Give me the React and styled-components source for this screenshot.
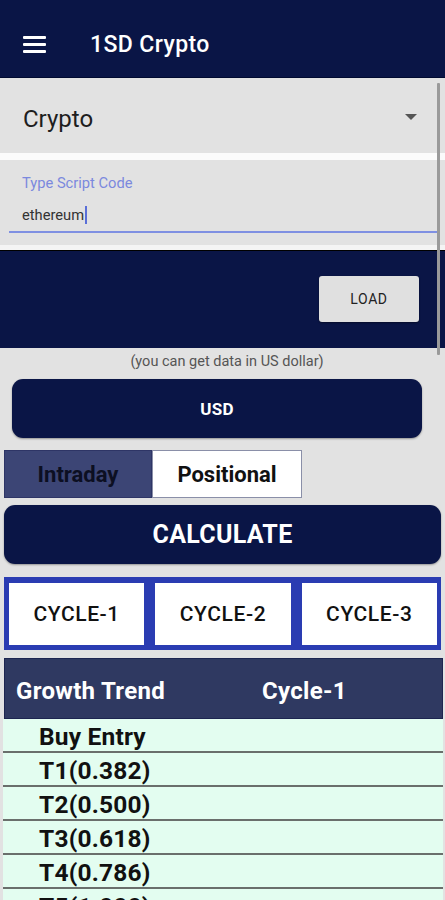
import React from "react";
import styled, { createGlobalStyle } from "styled-components";

const Global = createGlobalStyle`
  html, body { margin: 0; padding: 0; background: #e2e2e2; }
  body { font-family: Roboto, "Liberation Sans", sans-serif; width: 445px; height: 900px; overflow: hidden; }
`;

const NAVY = "#0a1546";

const Page = styled.div`
  position: relative;
  width: 445px;
  height: 900px;
  background: #e2e2e2;
  overflow: hidden;
`;

const AppBar = styled.header`
  height: 78px;
  background: ${NAVY};
  display: flex;
  align-items: center;
  padding-left: 23px;
  gap: 44px;
  box-sizing: border-box;
  padding-top: 12px;
  border-bottom: 1px solid #000a30;
`;

const Burger = styled.div`
  width: 23px;
  display: flex;
  flex-direction: column;
  gap: 4px;
  span { display: block; height: 3px; background: #fff; border-radius: 1px; }
`;

const Title = styled.h1`
  margin: 0;
  color: #fff;
  font-size: 23px;
  font-weight: 500;
  letter-spacing: 0.4px;
`;

const Spinner = styled.div`
  height: 75px;
  display: flex;
  align-items: center;
  justify-content: space-between;
  padding: 6px 20px 0 23px;
  box-sizing: border-box;
  width: 437px;
  font-size: 24px;
  color: #1e1e1e;
`;

const Triangle = styled.div`
  width: 0;
  height: 0;
  border-left: 6px solid transparent;
  border-right: 6px solid transparent;
  border-top: 6px solid #555;
  margin-top: -4px;
`;

const WhiteStrip = styled.div`
  height: ${(p) => p.$h}px;
  background: ${(p) => p.$c || "#fafafa"};
`;

const InputBox = styled.div`
  width: 437px;
  height: 85px;
  box-sizing: border-box;
  padding: 14px 0 0 9px;
  display: flex;
  flex-direction: column;
`;

const Label = styled.div`
  font-size: 14.7px;
  color: #7b89de;
  padding-left: 13px;
  height: 18px;
`;

const InputText = styled.div`
  margin-top: 14px;
  font-size: 14.7px;
  color: #333;
  padding-left: 13px;
  height: 17px;
  display: flex;
  align-items: center;
`;

const Caret = styled.span`
  display: inline-block;
  width: 2px;
  height: 18px;
  background: #5a6fd8;
  margin-left: 1px;
`;

const Underline = styled.div`
  margin-top: 8px;
  height: 2px;
  background: #7f90e2;
`;

const LoadPanel = styled.div`
  height: 98px;
  background: ${NAVY};
  border-top: 1px solid #000;
  box-sizing: border-box;
  display: flex;
  align-items: flex-start;
  justify-content: flex-end;
  padding: 25px 26px 0 0;
`;

const LoadButton = styled.button`
  width: 100px;
  height: 46px;
  background: #e0e0e0;
  border: none;
  border-radius: 3px;
  font-family: Roboto, "Liberation Sans", sans-serif;
  font-size: 14px;
  font-weight: 400;
  letter-spacing: 0.6px;
  color: #222;
  box-shadow: 0 1px 2px rgba(0,0,0,0.4);
`;

const Hint = styled.div`
  text-align: center;
  font-size: 14.5px;
  color: #555;
  padding: 5px 0 0 9px;
  height: 28px;
  box-sizing: border-box;
`;

const PillButton = styled.button`
  display: block;
  box-sizing: border-box;
  margin: ${(p) => p.$m};
  width: ${(p) => p.$w}px;
  height: 59px;
  background: ${NAVY};
  color: #fff;
  border: none;
  border-radius: 11px;
  font-family: Roboto, "Liberation Sans", sans-serif;
  font-weight: 700;
  font-size: ${(p) => p.$fs}px;
  letter-spacing: 0.3px;
  box-shadow: 0 1px 2px rgba(0,0,0,0.35);
`;

const Tabs = styled.div`
  display: flex;
  margin: 12px 0 0 4px;
  height: 48px;
`;

const Tab = styled.div`
  width: ${(p) => p.$w}px;
  box-sizing: border-box;
  display: flex;
  align-items: center;
  justify-content: center;
  font-size: 22px;
  font-weight: 700;
  color: ${(p) => (p.$active ? "#0c0f22" : "#111")};
  background: ${(p) => (p.$active ? "#3c4575" : "#fff")};
  border: 1px solid ${(p) => (p.$active ? "#2e3566" : "#8a8fa8")};
`;

const CycleRow = styled.div`
  margin: 13px 4px 0 4px;
  height: 73px;
  box-sizing: border-box;
  background: #2a3cb2;
  padding: 6px 4px 5px 5px;
  display: flex;
  gap: 11px;
`;

const CycleCell = styled.div`
  flex: 1;
  background: #fff;
  display: flex;
  align-items: center;
  justify-content: center;
  font-size: 21px;
  font-weight: 500;
  color: #111;
  letter-spacing: 0.6px;
`;

const Table = styled.div`
  margin: 8px 2px 0 4px;
`;

const HeadRow = styled.div`
  height: 61px;
  background: #2f3961;
  border: 1px solid #1d2550;
  box-sizing: border-box;
  display: grid;
  grid-template-columns: 246px 1fr;
  align-items: center;
  padding: 4px 0 0 11px;
  color: #fff;
  font-size: 24px;
  font-weight: 700;
  letter-spacing: 0.3px;
`;

const Row = styled.div`
  height: 34px;
  background: #e3fdf0;
  border-bottom: 2px solid #6a6f6c;
  box-sizing: border-box;
  display: flex;
  align-items: center;
  padding: 3px 0 0 36px;
  font-size: 24.5px;
  font-weight: 700;
  color: #111;
  margin-left: -1px;
  letter-spacing: 0.2px;
`;

const Scrollbar = styled.div`
  position: absolute;
  left: 437px;
  top: 83px;
  width: 3px;
  height: 272px;
  background: #9a9a9a;
  border-radius: 1px;
`;

const rows = ["Buy Entry", "T1(0.382)", "T2(0.500)", "T3(0.618)", "T4(0.786)", "T5(1.000)"];

export default function App() {
  return (
    <Page>
      <Global />
      <AppBar>
        <Burger><span /><span /><span /></Burger>
        <Title>1SD Crypto</Title>
      </AppBar>
      <Spinner>
        <span>Crypto</span>
        <Triangle />
      </Spinner>
      <WhiteStrip $h={7} $c="#fbfbfb" />
      <InputBox>
        <Label>Type Script Code</Label>
        <InputText>ethereum<Caret /></InputText>
        <Underline />
      </InputBox>
      <WhiteStrip $h={5} $c="#f4f4f4" />
      <LoadPanel>
        <LoadButton>LOAD</LoadButton>
      </LoadPanel>
      <Hint>(you can get data in US dollar)</Hint>
      <PillButton $m="3px 0 0 12px" $w={410} $fs={17}>USD</PillButton>
      <Tabs>
        <Tab $w={148} $active>Intraday</Tab>
        <Tab $w={150}>Positional</Tab>
      </Tabs>
      <PillButton $m="7px 0 0 4px" $w={437} $fs={25}>CALCULATE</PillButton>
      <CycleRow>
        <CycleCell>CYCLE-1</CycleCell>
        <CycleCell>CYCLE-2</CycleCell>
        <CycleCell>CYCLE-3</CycleCell>
      </CycleRow>
      <Table>
        <HeadRow>
          <span>Growth Trend</span>
          <span>Cycle-1</span>
        </HeadRow>
        {rows.map((r) => (
          <Row key={r}>{r}</Row>
        ))}
      </Table>
      <Scrollbar />
    </Page>
  );
}
